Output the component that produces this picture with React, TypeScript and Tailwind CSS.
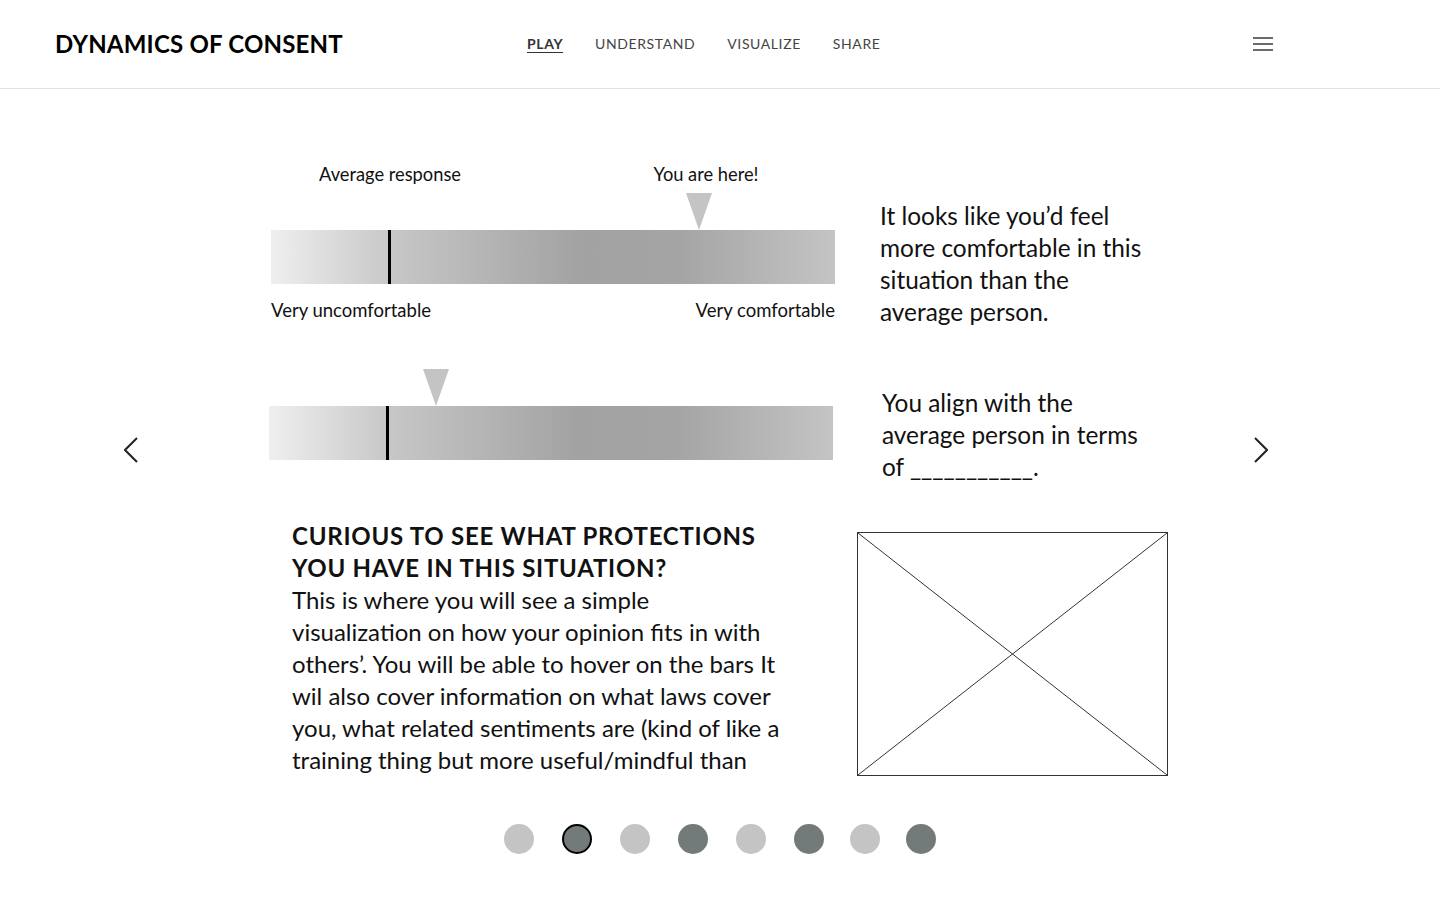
import React from "react";

const barBg =
  "bg-[linear-gradient(to_right,#efefef_0%,#c6c6c6_22%,#a2a2a2_55%,#a4a4a4_72%,#c4c4c4_100%)]";

function Triangle() {
  return (
    <svg width="26" height="37" viewBox="0 0 26 37" className="block">
      <polygon points="0,0 26,0 13,37" fill="#c4c4c4" />
    </svg>
  );
}

function Chevron({ dir }: { dir: "left" | "right" }) {
  return (
    <svg width="14" height="26" viewBox="0 0 14 26" className="block">
      <polyline
        points={dir === "left" ? "13,1 1,13 13,25" : "1,1 13,13 1,25"}
        fill="none"
        stroke="#222"
        strokeWidth="2"
      />
    </svg>
  );
}

export default function App() {
  const dots = [
    { c: "bg-[#c4c4c4]", m: "" },
    { c: "bg-[#737a7a] border-2 border-black", m: "ml-[28px]" },
    { c: "bg-[#c4c4c4]", m: "ml-[28px]" },
    { c: "bg-[#737a7a]", m: "ml-[28px]" },
    { c: "bg-[#c4c4c4]", m: "ml-[28px]" },
    { c: "bg-[#737a7a]", m: "ml-[28px]" },
    { c: "bg-[#c4c4c4]", m: "ml-[26px]" },
    { c: "bg-[#737a7a]", m: "ml-[26px]" },
  ];
  return (
    <div className="min-h-[900px] bg-white font-['Lato',sans-serif] text-[#111]">
      <header className="h-[89px] border-b border-[#e2e2e2] flex items-center pl-[55px] pr-[167px]">
        <div className="w-[472px] text-[24px] font-bold leading-none text-black tracking-[0.2px]">
          DYNAMICS OF CONSENT
        </div>
        <nav className="flex gap-[32px] text-[14px] leading-none text-[#444] tracking-[0.6px] -mt-[1px]">
          <span className="font-bold underline underline-offset-[3px] text-[#333]">PLAY</span>
          <span>UNDERSTAND</span>
          <span>VISUALIZE</span>
          <span>SHARE</span>
        </nav>
        <div className="ml-auto flex flex-col gap-[4px]">
          <div className="w-[20px] h-[2px] bg-[#6b6b6b]" />
          <div className="w-[20px] h-[2px] bg-[#6b6b6b]" />
          <div className="w-[20px] h-[2px] bg-[#6b6b6b]" />
        </div>
      </header>

      <main className="flex items-start pl-[124px] pt-[73px]">
        <div className="mt-[275px]">
          <Chevron dir="left" />
        </div>
        <div className="ml-[131px] w-[899px] flex flex-col">
          {/* Row 1 */}
          <div className="flex items-start">
            <div className="ml-[2px] w-[564px] flex flex-col">
              <div className="relative h-[24px] text-[18.3px] leading-[24px]">
                <span className="absolute left-[119px] -translate-x-1/2 whitespace-nowrap">
                  Average response
                </span>
                <span className="absolute left-[435px] -translate-x-1/2 whitespace-nowrap">
                  You are here!
                </span>
              </div>
              <div className="relative h-[37px] mt-[7px]">
                <div className="absolute left-[415px] top-0">
                  <Triangle />
                </div>
              </div>
              <div className={`relative h-[54px] ${barBg}`}>
                <div className="absolute left-[117px] top-0 h-full w-[3px] bg-black" />
              </div>
              <div className="mt-[14px] flex justify-between text-[18.5px] leading-[24px]">
                <span>Very uncomfortable</span>
                <span>Very comfortable</span>
              </div>
            </div>
            <p className="ml-[45px] mt-[38px] w-[275px] text-[24.4px] leading-[32px]">
              It looks like you’d feel more comfortable in this situation than the average person.
            </p>
          </div>

          {/* Row 2 */}
          <div className="flex items-start mt-[41px]">
            <div className="w-[564px] flex flex-col">
              <div className="relative h-[37px]">
                <div className="absolute left-[154px] top-0">
                  <Triangle />
                </div>
              </div>
              <div className={`relative h-[54px] ${barBg}`}>
                <div className="absolute left-[117px] top-0 h-full w-[3px] bg-black" />
              </div>
            </div>
            <p className="ml-[49px] mt-[18px] w-[275px] text-[24.4px] leading-[32px]">
              You align with the average person in terms of ___________.
            </p>
          </div>

          {/* Row 3 */}
          <div className="flex items-end mt-[37px]">
            <div className="ml-[23px] w-[510px] h-[256px] text-[24px] leading-[32px]">
              <h2 className="font-bold tracking-[0.75px] whitespace-nowrap">
                CURIOUS TO SEE WHAT PROTECTIONS
                <br />
                YOU HAVE IN THIS SITUATION?
              </h2>
              <p className="text-[24px] whitespace-nowrap">
                This is where you will see a simple
                <br />
                visualization on how your opinion fits in with
                <br />
                others’. You will be able to hover on the bars It
                <br />
                wil also cover information on what laws cover
                <br />
                you, what related sentiments are (kind of like a
                <br />
                training thing but more useful/mindful than
              </p>
            </div>
            <div className="ml-[55px] w-[311px] h-[244px] border border-[#333]">
              <svg width="100%" height="100%" viewBox="0 0 309 242" preserveAspectRatio="none" className="block">
                <line x1="0" y1="0" x2="309" y2="242" stroke="#333" strokeWidth="1" />
                <line x1="309" y1="0" x2="0" y2="242" stroke="#333" strokeWidth="1" />
              </svg>
            </div>
          </div>
        </div>
        <div className="ml-[86px] mt-[275px]">
          <Chevron dir="right" />
        </div>
      </main>

      <div className="flex justify-center mt-[48px]">
        {dots.map((d, i) => (
          <div key={i} className={`w-[30px] h-[30px] rounded-full ${d.c} ${d.m}`} />
        ))}
      </div>
    </div>
  );
}
